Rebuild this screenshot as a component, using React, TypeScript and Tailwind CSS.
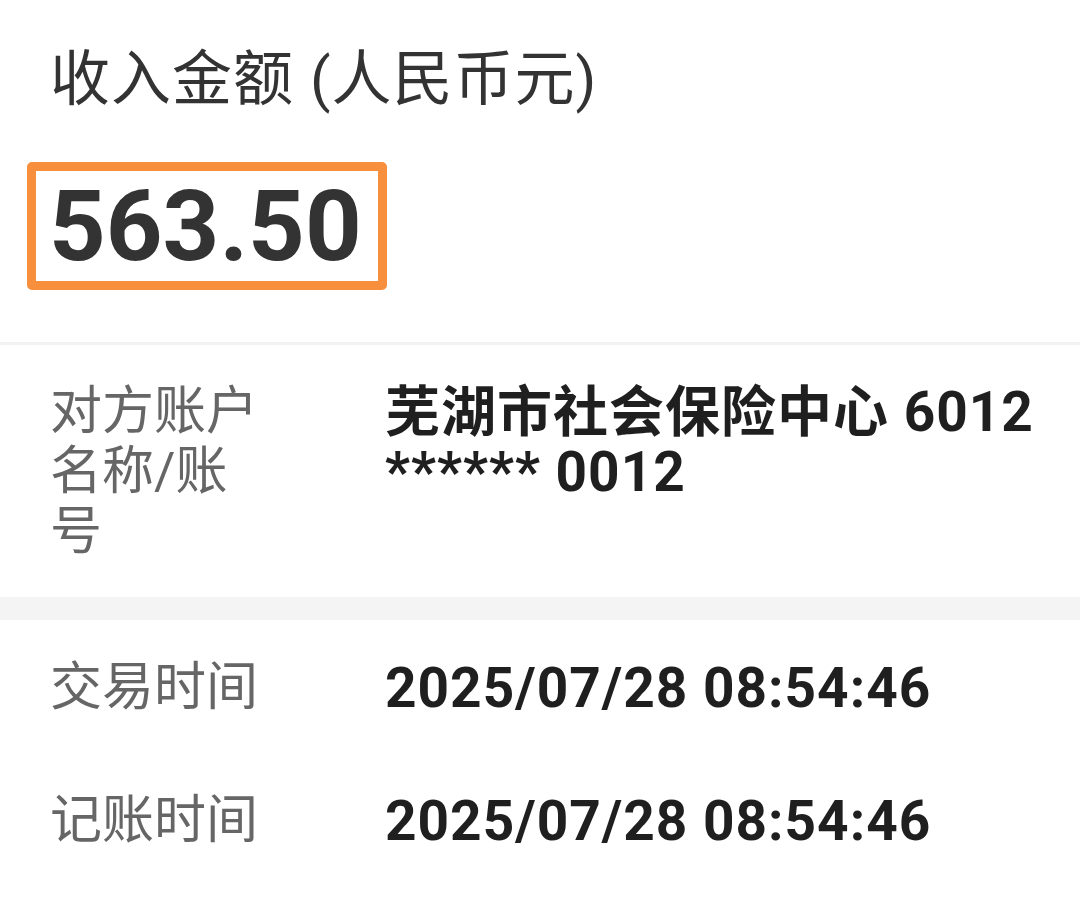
const rows = [
  { label: '交易时间', value: '2025/07/28 08:54:46' },
  { label: '记账时间', value: '2025/07/28 08:54:46' },
];

function InfoRow({ label, value }: { label: string; value: string }) {
  return (
    <div className="flex items-start pl-[50px] pr-[20px]">
      <div className="w-[216px] shrink-0 text-[52px] leading-[60px] text-[#666666]">{label}</div>
      <div className="ml-[119px] flex-1 text-[55px] leading-[60px] font-bold tracking-[1px] text-[#1f1f1f]">
        {value}
      </div>
    </div>
  );
}

export default function App() {
  return (
    <div
      className="w-[1080px] h-[916px] overflow-hidden bg-white"
      style={{ fontFamily: 'Roboto, "Noto Sans CJK SC", sans-serif' }}
    >
      {/* Amount header */}
      <div className="h-[345px] pt-[40px] pl-[50px] border-b-[3px] border-[#f2f2f2]">
        <div className="text-[60px] leading-[80px] tracking-[1px] text-[#333333]">收入金额 (人民币元)</div>
        <div className="mt-[42px] -ml-[23px] inline-flex h-[128px] w-[360px] items-center rounded-[5px] border-[9px] border-[#f78f3c] pl-[13px]">
          <span className="text-[99px] leading-none font-bold text-[#333333]">563.50</span>
        </div>
      </div>

      {/* Counterparty */}
      <div className="h-[252px] pt-[37px]">
        <InfoRow label="对方账户名称/账号" value="芜湖市社会保险中心 6012 ****** 0012" />
      </div>

      <div className="h-[23px] bg-[#f4f4f4]" />

      {/* Times */}
      <div className="pt-[38px] flex flex-col gap-[73px]">
        {rows.map((r) => (
          <InfoRow key={r.label} label={r.label} value={r.value} />
        ))}
      </div>
    </div>
  );
}
